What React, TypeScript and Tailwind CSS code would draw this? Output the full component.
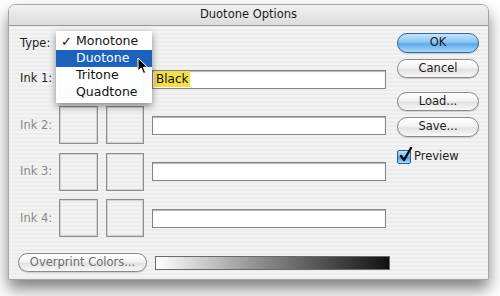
import React from "react";

const font = "font-['Lucida_Grande','DejaVu_Sans',sans-serif]";

type Ink = { label: string; enabled: boolean; name?: string };

const inks: Ink[] = [
  { label: "Ink 1:", enabled: true, name: "Black" },
  { label: "Ink 2:", enabled: false },
  { label: "Ink 3:", enabled: false },
  { label: "Ink 4:", enabled: false },
];

function AquaButton({ label, primary, className }: { label: string; primary?: boolean; className?: string }) {
  const look = primary
    ? "border-[#36659c] bg-[linear-gradient(to_bottom,#c4e4fb_0%,#8cc6f2_45%,#5ea8ea_55%,#a6dbfb_100%)]"
    : "border-[#8a8a8a] bg-[linear-gradient(to_bottom,#ffffff_0%,#f3f3f3_45%,#e2e2e2_55%,#f8f8f8_100%)]";
  return (
    <div
      className={`flex items-center justify-center rounded-full border text-[11.5px] text-[#1c1c1c] shadow-[0_1px_1px_rgba(0,0,0,0.15)] ${look} ${className ?? ""}`}
    >
      {label}
    </div>
  );
}

function InkRow({ ink }: { ink: Ink }) {
  return (
    <div className="flex h-[38px] items-center">
      <div className={`w-[39px] text-[11.5px] ${ink.enabled ? "text-[#1e1e1e]" : "text-[#8a8a8a]"}`}>{ink.label}</div>
      <div className="h-[38px] w-[39px] border border-[#8e8e8e] shadow-[inset_0_0_0_1px_#d2d2d2]" />
      <div className="ml-[8px] h-[38px] w-[38px] border border-[#8e8e8e] shadow-[inset_0_0_0_1px_#d2d2d2]" />
      <div className="ml-[8px] flex h-[19px] w-[234px] items-center border border-[#858585] bg-white pl-[1px] shadow-[inset_0_1px_1px_rgba(0,0,0,0.3)]">
        {ink.name && <span className="bg-[#f4df4a] px-[2px] text-[12px] leading-[16px] text-[#111]">{ink.name}</span>}
      </div>
    </div>
  );
}

function TypeMenu() {
  const items = ["Monotone", "Duotone", "Tritone", "Quadtone"];
  return (
    <div className="absolute left-[47px] top-[26px] w-[96px] bg-white/95 py-[2px] shadow-[0_3px_7px_rgba(0,0,0,0.45)]">
      {items.map((item, i) => (
        <div
          key={item}
          className={`relative flex h-[17px] items-center pl-[20px] text-[12.5px] ${i === 1 ? "bg-[#1c62bb] text-white" : "text-[#111]"}`}
        >
          {i === 0 && <span className="absolute left-[5px] text-[13px] font-bold">✓</span>}
          {item}
        </div>
      ))}
    </div>
  );
}

function Cursor() {
  return (
    <svg className="absolute left-[128px] top-[52px]" width="12" height="18" viewBox="0 0 12 18">
      <path d="M1 1 L1 14 L4.2 11 L6.5 16.5 L8.6 15.6 L6.4 10.3 L10.6 10.3 Z" fill="#000" stroke="#fff" strokeWidth="1" strokeLinejoin="round" />
    </svg>
  );
}

function Checkbox() {
  return (
    <div className="relative h-[14px] w-[14px] rounded-[2px] border border-[#2f5f99] bg-[linear-gradient(to_bottom,#bfe2fb,#6fb4ee_50%,#4f9be6_55%,#a9dbfb)]">
      <svg className="absolute left-[1px] top-[-4px]" width="14" height="16" viewBox="0 0 14 16">
        <path d="M2 9 L5 13 L12 1" fill="none" stroke="#0d0d0d" strokeWidth="2.4" strokeLinecap="round" strokeLinejoin="round" />
      </svg>
    </div>
  );
}

export default function App() {
  return (
    <div className={`h-[296px] w-[500px] overflow-hidden bg-white pl-[8px] pt-[4px] ${font}`}>
      <div className="relative h-[276px] w-[481px] overflow-hidden rounded-t-[7px] border border-[#a6a6a6] bg-[repeating-linear-gradient(180deg,#ececec_0px,#ececec_2px,#f3f3f3_2px,#f3f3f3_4px)] shadow-[0_9px_16px_rgba(0,0,0,0.5)]">
        <div className="flex h-[21px] items-center justify-center border-b border-[#9a9a9a] bg-[linear-gradient(to_bottom,#f1f1f1,#dcdcdc)] text-[11.5px] text-[#1c1c1c]">
          Duotone Options
        </div>

        <div className="flex pl-[11px]">
          <div className="w-[371px]">
            <div className="mt-[9px] flex h-[18px] items-center text-[11.5px] text-[#1e1e1e]">Type:</div>
            <div className="mt-[7px] flex flex-col gap-[8.4px]">
              {inks.map((ink) => (
                <InkRow key={ink.label} ink={ink} />
              ))}
            </div>
            <div className="mt-[16px] ml-[-2px] flex items-center">
              <AquaButton label="Overprint Colors..." className="h-[19px] w-[129px] text-[#6e6e6e]" />
              <div className="ml-[8px] h-[14px] w-[235px] border border-[#6a6a6a] bg-[linear-gradient(to_right,#ffffff,#8c8c8c_45%,#111111)]" />
            </div>
          </div>

          <div className="ml-[6px] flex w-[82px] flex-col">
            <AquaButton label="OK" primary className="mt-[7px] h-[20px]" />
            <AquaButton label="Cancel" className="mt-[6px] h-[19px]" />
            <AquaButton label="Load..." className="mt-[14px] h-[19px]" />
            <AquaButton label="Save..." className="mt-[6px] h-[20px]" />
            <div className="mt-[11px] flex items-center gap-[3px] text-[11.5px] text-[#1e1e1e]">
              <Checkbox />
              Preview
            </div>
          </div>
        </div>

        <TypeMenu />
        <Cursor />
      </div>
    </div>
  );
}
